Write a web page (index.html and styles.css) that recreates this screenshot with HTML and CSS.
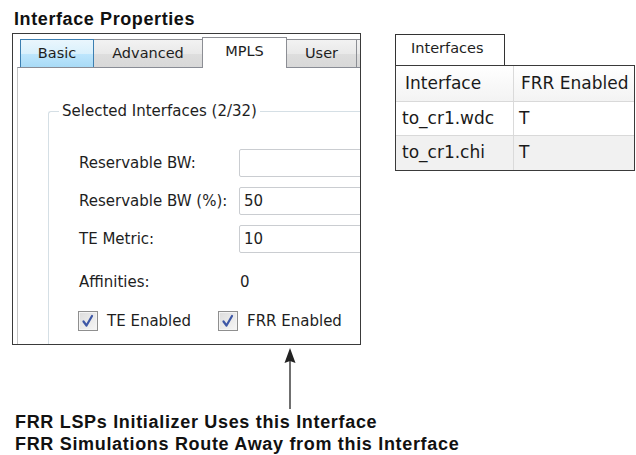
FILE: index.html
```html
<!DOCTYPE html>
<html>
<head lang="en">
    <meta charset="UTF-8">
    <title>Interface Properties</title>
    <link rel="stylesheet" href="styles.css">
</head>
<body>
<div class="stage">
    <div class="props">
        <h1 class="title">Interface Properties</h1>
        <div class="dialog">
            <div class="tabs">
                <div class="tab tab-basic hover">Basic</div>
                <div class="tab tab-adv">Advanced</div>
                <div class="tab tab-mpls selected">MPLS</div>
                <div class="tab tab-user">User</div>
                <div class="tab tab-more"></div>
            </div>
            <div class="panel">
                <fieldset class="group">
                    <legend>Selected Interfaces (2/32)</legend>
                    <div class="form">
                        <label>Reservable BW:</label>
                        <div class="field"></div>
                        <label>Reservable BW (%):</label>
                        <div class="field">50</div>
                        <label>TE Metric:</label>
                        <div class="field">10</div>
                        <label>Affinities:</label>
                        <div class="value">0</div>
                        <div class="checks">
                            <span class="check">
                                <svg width="20" height="20" viewBox="0 0 20 20"><polyline points="5.5,10.5 8.5,14.5 14,5" fill="none" stroke="#3d57a6" stroke-width="2.2" stroke-linecap="round" stroke-linejoin="round"/></svg>
                            </span>
                            <span class="check-label">TE Enabled</span>
                            <span class="check">
                                <svg width="20" height="20" viewBox="0 0 20 20"><polyline points="5.5,10.5 8.5,14.5 14,5" fill="none" stroke="#3d57a6" stroke-width="2.2" stroke-linecap="round" stroke-linejoin="round"/></svg>
                            </span>
                            <span class="check-label">FRR Enabled</span>
                        </div>
                    </div>
                </fieldset>
            </div>
        </div>
    </div>
    <div class="side">
        <div class="side-tab">Interfaces</div>
        <div class="grid">
            <div class="trow thead">
                <div class="cell">Interface</div>
                <div class="cell">FRR Enabled</div>
            </div>
            <div class="trow">
                <div class="cell">to_cr1.wdc</div>
                <div class="cell">T</div>
            </div>
            <div class="trow alt">
                <div class="cell">to_cr1.chi</div>
                <div class="cell">T</div>
            </div>
        </div>
    </div>
</div>
<svg class="arrow" width="12" height="61" viewBox="0 0 12 61">
    <line x1="6" y1="10" x2="6" y2="61" stroke="#222" stroke-width="1.3"/>
    <polygon points="6,0 11.5,15 6,13 0.5,15" fill="#222"/>
</svg>
<p class="caption">FRR LSPs Initializer Uses this Interface<br>FRR Simulations Route Away from this Interface</p>
</body>
</html>
```
FILE: styles.css
```css
*{
    margin: 0;
    padding: 0;
    box-sizing: border-box;
}
body{
    width: 636px;
    height: 455px;
    overflow: hidden;
    background: #ffffff;
    font-family: "DejaVu Sans", sans-serif;
    color: #1e1e1e;
}
.stage{
    display: flex;
    align-items: flex-start;
}
.props{
    margin-left: 12px;
    width: 349px;
}
.title{
    font: bold 18px/20px "Liberation Sans", Arial, sans-serif;
    letter-spacing: 0.6px;
    color: #111111;
    margin: 9px 0 4px 2px;
}
.dialog{
    height: 312px;
    border: 1px solid #3a3a3a;
    background: #ffffff;
    overflow: hidden;
}
.tabs{
    display: flex;
    align-items: flex-end;
    height: 33px;
    padding-left: 7px;
}
.tab{
    position: relative;
    height: 28px;
    margin-left: -1px;
    border: 1px solid #8c8e94;
    border-bottom: 0;
    background: linear-gradient(#f2f2f2, #e9e9e9 50%, #dedede 50%, #d8d8d8);
    font-size: 14.5px;
    line-height: 26px;
    text-align: center;
    flex-shrink: 0;
}
.tab-basic{
    width: 74px;
    margin-left: 0;
}
.tab-adv{
    width: 110px;
}
.tab-mpls{
    width: 85px;
}
.tab-user{
    width: 71px;
}
.tab-more{
    width: 20px;
}
.tab.hover{
    border-color: #3c7fb1;
    background: linear-gradient(#eaf6fd, #d9f0fc 50%, #bee6fd 50%, #a9dbf6);
    z-index: 1;
}
.tab.selected{
    height: 31px;
    margin-bottom: -1px;
    background: #ffffff;
    z-index: 2;
}
.panel{
    margin-left: 4px;
    height: 278px;
    border-top: 1px solid #898c95;
    border-left: 1px solid #c4c4c4;
}
.group{
    width: 360px;
    height: 300px;
    margin: 34px 0 0 30px;
    padding: 0 0 0 10px;
    border: 1px solid #d5dfe5;
    border-right: 0;
    border-bottom: 0;
    border-radius: 3px 0 0 0;
}
.group legend{
    padding: 0 3px;
    font-size: 15px;
    line-height: 18px;
}
.form{
    display: grid;
    grid-template-columns: 160px 1fr;
    grid-template-rows: 28px 28px 28px 38px 20px;
    row-gap: 10px;
    align-items: center;
    margin: 29px 0 0 20px;
    font-size: 15px;
}
.field{
    height: 28px;
    border: 1px solid #cacdd1;
    border-radius: 2px;
    padding-left: 4px;
    line-height: 26px;
    background: #ffffff;
}
.value{
    padding-left: 1px;
}
.checks{
    grid-column: 1 / -1;
    display: flex;
    align-items: center;
    margin-left: -1px;
}
.check{
    width: 20px;
    height: 20px;
    border: 1px solid #8f8f8f;
    background: linear-gradient(135deg, #dcdcdc, #f6f6f6);
    box-shadow: inset 0 0 0 1px #f4f4f4;
    flex-shrink: 0;
}
.check svg{
    display: block;
    margin: -1px;
}
.check-label{
    margin-left: 9px;
    margin-right: 27px;
}
.side{
    margin: 34px 0 0 34px;
    width: 240px;
}
.side-tab{
    width: 110px;
    height: 31px;
    border: 1px solid #333333;
    border-bottom: 0;
    padding-left: 15px;
    font-size: 14.5px;
    line-height: 27px;
}
.grid{
    border: 1px solid #3a3a3a;
    font-size: 17px;
    color: #1a1a1a;
}
.trow{
    display: grid;
    grid-template-columns: 117px 1fr;
    height: 34px;
    border-bottom: 1px solid #d9d9d9;
    line-height: 33px;
}
.trow .cell{
    padding-left: 6px;
    white-space: nowrap;
}
.trow .cell + .cell{
    border-left: 1px solid #dadada;
    padding-left: 5px;
}
.thead{
    height: 36px;
    line-height: 35px;
    background: linear-gradient(#ffffff, #f3f3f3);
}
.thead .cell{
    padding-left: 9px;
}
.thead .cell + .cell{
    padding-left: 7px;
}
.alt{
    height: 34px;
    border-bottom: 0;
    background: #f1f1f1;
}
.arrow{
    display: block;
    margin: 3px 0 0 284px;
}
.caption{
    margin: 2px 0 0 15px;
    font: bold 18px/22px "Liberation Sans", Arial, sans-serif;
    letter-spacing: 0.68px;
    color: #111111;
}
```
